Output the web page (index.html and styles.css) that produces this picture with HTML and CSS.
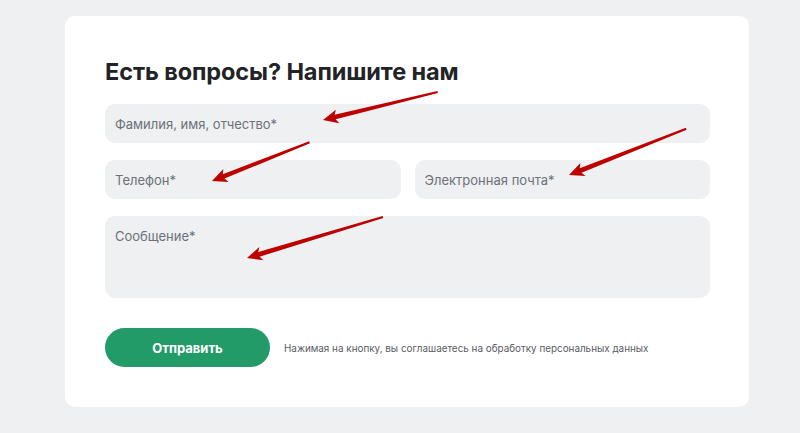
FILE: index.html
```html
<!DOCTYPE html>
<html lang="ru">
<head>
<meta charset="utf-8">
<title>Есть вопросы? Напишите нам</title>
<link rel="stylesheet" href="styles.css">
</head>
<body>
<main class="card">
  <h2 class="title">Есть вопросы? Напишите нам</h2>
  <form class="form">
    <input class="field field-wide" type="text" placeholder="Фамилия, имя, отчество*">
    <div class="row">
      <input class="field" type="tel" placeholder="Телефон*">
      <input class="field" type="email" placeholder="Электронная почта*">
    </div>
    <textarea class="field field-area" placeholder="Сообщение*"></textarea>
    <div class="actions">
      <button class="submit" type="button">Отправить</button>
      <p class="note">Нажимая на кнопку, вы соглашаетесь на обработку персональных данных</p>
    </div>
  </form>
</main>
<svg class="arrows" width="800" height="433" viewBox="0 0 800 433" aria-hidden="true">
  <g class="arrow-ink">
    <polygon transform="translate(323 120) rotate(-13.7)" points="0,0 15,-7 12.5,-2.4 118,-1.1 118,1.1 12.5,2.4 15,7"/>
    <polygon transform="translate(212 181) rotate(-21.7)" points="0,0 15,-7 12.5,-2.4 105,-1.1 105,1.1 12.5,2.4 15,7"/>
    <polygon transform="translate(569 175) rotate(-21.5)" points="0,0 15,-7 12.5,-2.4 126,-1.1 126,1.1 12.5,2.4 15,7"/>
    <polygon transform="translate(247 258) rotate(-16.8)" points="0,0 15,-7 12.5,-2.4 142,-1.1 142,1.1 12.5,2.4 15,7"/>
  </g>
</svg>
</body>
</html>
```
FILE: styles.css
```css
html, body {
  margin: 0;
  padding: 0;
}
body {
  background: #eef0f2;
  font-family: Inter, "Noto Sans", "Liberation Sans", sans-serif;
  width: 800px;
  height: 433px;
  overflow: hidden;
  position: relative;
}
.card {
  box-sizing: border-box;
  margin: 16px 0 0 65px;
  width: 684px;
  height: 391px;
  background: #ffffff;
  border-radius: 10px;
  padding: 42px 39px 0 40px;
}
.title {
  margin: 0 0 18px 0;
  font-size: 23.5px;
  line-height: 28px;
  font-weight: 700;
  color: #222326;
  letter-spacing: -0.1px;
}
.form {
  display: flex;
  flex-direction: column;
  gap: 17px;
}
.row {
  display: grid;
  grid-template-columns: 1fr 1fr;
  gap: 14px;
}
.field {
  box-sizing: border-box;
  display: block;
  width: 100%;
  height: 39px;
  border: none;
  outline: none;
  border-radius: 10px;
  background: #eef0f2;
  padding: 0 10px;
  font-family: Inter, "Noto Sans", "Liberation Sans", sans-serif;
  font-size: 13px;
  color: #333;
  margin: 0;
}
.field::placeholder {
  color: #6c7077;
  opacity: 1;
}
.field-area {
  height: 82px;
  padding: 12px 10px;
  resize: none;
  line-height: 16px;
}
.actions {
  display: flex;
  align-items: center;
  gap: 14px;
  margin-top: 13px;
}
.submit {
  width: 165px;
  height: 39px;
  border: none;
  border-radius: 20px;
  background: #239b69;
  color: #ffffff;
  font-family: Inter, "Noto Sans", "Liberation Sans", sans-serif;
  font-size: 13px;
  font-weight: 700;
  padding: 0;
  flex: none;
}
.note {
  margin: 0;
  font-size: 9.9px;
  color: #585c64;
  line-height: 14px;
}
.arrows {
  position: absolute;
  left: 0;
  top: 0;
  pointer-events: none;
}
.arrow-ink {
  fill: #bd0000;
}
```
